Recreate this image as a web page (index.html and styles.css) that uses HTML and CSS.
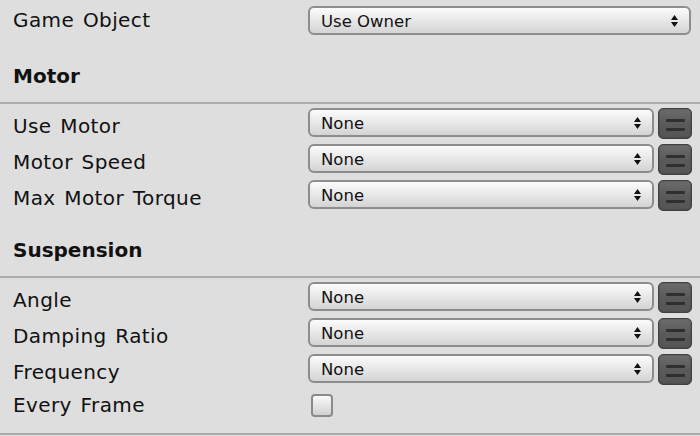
FILE: index.html
```html
<!DOCTYPE html>
<html>
<head>
<meta charset="utf-8">
<link rel="stylesheet" href="styles.css">
</head>
<body>
<div class="inspector">
  <div class="row row-first">
    <div class="label">Game Object</div>
    <div class="select select-full"><span>Use Owner</span><svg class="arrows" width="7" height="12" viewBox="0 0 7 12"><polygon points="0,5 3.5,0 7,5"/><polygon points="0,7 7,7 3.5,12"/></svg></div>
  </div>

  <div class="header">Motor</div>
  <div class="group">
    <div class="row">
      <div class="label">Use Motor</div>
      <div class="select"><span>None</span><svg class="arrows" width="7" height="12" viewBox="0 0 7 12"><polygon points="0,5 3.5,0 7,5"/><polygon points="0,7 7,7 3.5,12"/></svg></div>
      <div class="btn"><i></i><i></i></div>
    </div>
    <div class="row">
      <div class="label">Motor Speed</div>
      <div class="select"><span>None</span><svg class="arrows" width="7" height="12" viewBox="0 0 7 12"><polygon points="0,5 3.5,0 7,5"/><polygon points="0,7 7,7 3.5,12"/></svg></div>
      <div class="btn"><i></i><i></i></div>
    </div>
    <div class="row">
      <div class="label">Max Motor Torque</div>
      <div class="select"><span>None</span><svg class="arrows" width="7" height="12" viewBox="0 0 7 12"><polygon points="0,5 3.5,0 7,5"/><polygon points="0,7 7,7 3.5,12"/></svg></div>
      <div class="btn"><i></i><i></i></div>
    </div>
  </div>

  <div class="header">Suspension</div>
  <div class="group">
    <div class="row">
      <div class="label">Angle</div>
      <div class="select"><span>None</span><svg class="arrows" width="7" height="12" viewBox="0 0 7 12"><polygon points="0,5 3.5,0 7,5"/><polygon points="0,7 7,7 3.5,12"/></svg></div>
      <div class="btn"><i></i><i></i></div>
    </div>
    <div class="row">
      <div class="label">Damping Ratio</div>
      <div class="select"><span>None</span><svg class="arrows" width="7" height="12" viewBox="0 0 7 12"><polygon points="0,5 3.5,0 7,5"/><polygon points="0,7 7,7 3.5,12"/></svg></div>
      <div class="btn"><i></i><i></i></div>
    </div>
    <div class="row">
      <div class="label">Frequency</div>
      <div class="select"><span>None</span><svg class="arrows" width="7" height="12" viewBox="0 0 7 12"><polygon points="0,5 3.5,0 7,5"/><polygon points="0,7 7,7 3.5,12"/></svg></div>
      <div class="btn"><i></i><i></i></div>
    </div>
    <div class="row row-last">
      <div class="label">Every Frame</div>
      <div class="checkbox"></div>
    </div>
  </div>
</div>
</body>
</html>
```

FILE: styles.css
```css
html, body {
  margin: 0;
  padding: 0;
  background: #dedede;
}
body {
  width: 700px;
  height: 436px;
  overflow: hidden;
  font-family: "DejaVu Sans", "Liberation Sans", sans-serif;
  color: #111;
}
.inspector {
  display: flex;
  flex-direction: column;
}
.row {
  display: flex;
  align-items: flex-start;
  height: 36px;
  padding-right: 8px;
}
.row-first {
  height: 36px;
  padding-top: 6px;
}
.row-first .label {
  padding-top: 2px;
}
.label {
  width: 295px;
  padding-left: 13px;
  font-size: 20px;
  line-height: 24px;
  letter-spacing: 0.4px;
  word-spacing: 2px;
  padding-top: 6px;
  white-space: nowrap;
}
.header {
  height: 62px;
  box-sizing: border-box;
  padding: 22px 0 0 13px;
  font-size: 20px;
  line-height: 24px;
  font-weight: bold;
  border-bottom: 2px solid #ababab;
}
.group {
  padding-top: 4px;
  display: flex;
  flex-direction: column;
}
.select {
  flex: 1;
  height: 29px;
  box-sizing: border-box;
  border: 2px solid #8d8d8d;
  border-radius: 6px;
  background: linear-gradient(#fbfbfb, #e6e6e6 55%, #d4d4d4);
  display: flex;
  align-items: center;
  padding: 0 10px 0 11px;
  font-size: 16.5px;
  color: #111;
}
.select span {
  flex: 1;
  padding-top: 1px;
}
.select-full {
  margin-right: 1px;
}
.arrows {
  fill: #111;
  margin-right: 1px;
}
.btn {
  width: 34px;
  height: 31px;
  margin-left: 4px;
  box-sizing: border-box;
  border: 1px solid #404040;
  border-radius: 5px;
  background: linear-gradient(#6c6c6c, #5a5a5a 50%, #555);
  box-shadow: inset 0 0 2px rgba(0,0,0,0.35);
  display: flex;
  flex-direction: column;
  align-items: center;
  padding-top: 10px;
  gap: 6px;
}
.btn i {
  display: block;
  width: 19px;
  height: 3px;
  border-radius: 1px;
  background: #2f2f2f;
}
.row-last {
  height: 43px;
  border-bottom: 2px solid #ababab;
}
.row-last .label {
  padding-top: 3px;
}
.checkbox {
  margin-top: 4px;
  margin-left: 3px;
  width: 22px;
  height: 23px;
  box-sizing: border-box;
  border: 2px solid #8a8a8a;
  border-radius: 4px;
  background: linear-gradient(#fafafa, #d0d0d0);
}
```
